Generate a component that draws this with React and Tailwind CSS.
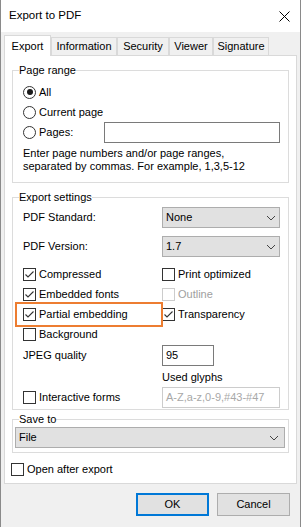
import React from 'react'

const font = "font-['Liberation_Sans',Arial,sans-serif]"

function Box({ checked, disabled }) {
  return (
    <span
      className={`w-[13px] h-[13px] border bg-white flex items-center justify-center shrink-0 ${
        disabled ? 'border-[#cccccc]' : 'border-[#333333]'
      }`}
    >
      {checked && (
        <svg width="11" height="11" viewBox="0 0 11 11">
          <path d="M1.5 5.5 L4 8 L9.5 2.5" fill="none" stroke="#333" strokeWidth="1.1" />
        </svg>
      )}
    </span>
  )
}

function CheckRow({ label, checked, disabled }) {
  return (
    <div className="h-[20px] flex items-center gap-[3px]">
      <Box checked={checked} disabled={disabled} />
      <span className={disabled ? 'text-[#a0a0a0]' : 'text-black'}>{label}</span>
    </div>
  )
}

function Radio({ label, checked }) {
  return (
    <div className="flex items-center gap-[3px]">
      <span className="w-[13px] h-[13px] rounded-full border border-[#333333] bg-white flex items-center justify-center shrink-0">
        {checked && <span className="w-[6px] h-[6px] rounded-full bg-[#1a1a1a]" />}
      </span>
      <span>{label}</span>
    </div>
  )
}

function Chevron() {
  return (
    <svg width="10" height="6" viewBox="0 0 10 6" className="shrink-0">
      <path d="M1 1 L5 5 L9 1" fill="none" stroke="#444" strokeWidth="1" />
    </svg>
  )
}

function Select({ value, className = '' }) {
  return (
    <div
      className={`h-[21px] bg-[#e1e1e1] border border-[#adadad] flex items-center justify-between pl-[3px] pr-[3px] ${className}`}
    >
      <span>{value}</span>
      <Chevron />
    </div>
  )
}

function Group({ title, children, className = '' }) {
  return (
    <fieldset className={`border border-[#dcdcdc] px-[6px] ${className}`}>
      <legend className="leading-[14px] h-[14px]">{title}</legend>
      {children}
    </fieldset>
  )
}

export default function App() {
  const tabs = [
    { name: 'Export', w: 'w-[47px]', active: true },
    { name: 'Information', w: 'w-[66px]' },
    { name: 'Security', w: 'w-[52px]' },
    { name: 'Viewer', w: 'w-[44px]' },
    { name: 'Signature', w: 'w-[56px]' },
  ]

  return (
    <div className={`${font} text-[11px] text-black w-[301px] h-[527px] bg-[#f0f0f0] border-x border-[#8a8a8a] flex flex-col`}>
      {/* title bar */}
      <div className="h-[32px] bg-white flex items-center justify-between pl-[8px] pr-[10px] shrink-0">
        <span className="text-[11.5px]">Export to PDF</span>
        <svg width="11" height="11" viewBox="0 0 11 11">
          <path d="M0.5 0.5 L10.5 10.5 M10.5 0.5 L0.5 10.5" stroke="#000" strokeWidth="1" />
        </svg>
      </div>

      {/* tabs */}
      <div className="h-[23px] flex items-end pl-[3px] shrink-0">
        {tabs.map(t =>
          t.active ? (
            <div
              key={t.name}
              className={`${t.w} h-[21px] -mb-[1px] relative z-10 bg-white border-x border-t border-[#d9d9d9] flex items-center justify-center`}
            >
              {t.name}
            </div>
          ) : (
            <div
              key={t.name}
              className={`${t.w} h-[18px] bg-[#f0f0f0] border border-b-0 border-[#d9d9d9] flex items-center justify-center`}
            >
              {t.name}
            </div>
          )
        )}
      </div>

      {/* tab page */}
      <div className="relative ml-[3px] w-[293px] h-[429px] bg-white border border-[#d9d9d9] px-[7px] shrink-0">
        <Group title="Page range" className="mt-[7px] pb-[9px]">
          <div className="pl-[4px] pr-[2px] pt-[5px]">
            <div className="h-[20px] flex items-center">
              <Radio label="All" checked />
            </div>
            <div className="h-[20px] flex items-center">
              <Radio label="Current page" />
            </div>
            <div className="h-[21px] flex items-center">
              <Radio label="Pages:" />
              <div className="ml-auto w-[176px] h-[21px] border border-[#7a7a7a] bg-white" />
            </div>
            <p className="mt-[4px] leading-[13px]">
              Enter page numbers and/or page ranges,
              <br />
              separated by commas. For example, 1,3,5-12
            </p>
          </div>
        </Group>

        <Group title="Export settings" className="mt-[7px] pb-[1px]">
          <div className="pl-[4px] pr-[2px] pt-[3px] grid grid-cols-[139px_1fr]">
            <div className="h-[21px] flex items-center">PDF Standard:</div>
            <Select value="None" />
            <div className="h-[21px] mt-[8px] flex items-center">PDF Version:</div>
            <Select value="1.7" className="mt-[8px]" />

            <div className="mt-[7px]">
              <CheckRow label="Compressed" checked />
            </div>
            <div className="mt-[7px]">
              <CheckRow label="Print optimized" />
            </div>
            <CheckRow label="Embedded fonts" checked />
            <CheckRow label="Outline" disabled />
            <CheckRow label="Partial embedding" checked />
            <CheckRow label="Transparency" checked />
            <CheckRow label="Background" />
            <div />

            <div className="h-[21px] mt-[1px] flex items-center">JPEG quality</div>
            <div className="mt-[1px] w-[52px] h-[21px] border border-[#7a7a7a] bg-white flex items-center pl-[3px]">
              95
            </div>

            <div />
            <div className="mt-[4px] h-[14px] leading-[14px]">Used glyphs</div>

            <div className="mt-[3px] h-[21px] flex items-center">
              <div className="flex items-center gap-[3px]">
                <Box />
                <span>Interactive forms</span>
              </div>
            </div>
            <div className="mt-[3px] h-[21px] border border-[#cccccc] bg-white flex items-center pl-[3px] text-[#a8a8a8]">
              A-Z,a-z,0-9,#43-#47
            </div>
          </div>
        </Group>

        {/* highlight around "Partial embedding" */}
        <div className="absolute left-[10px] top-[246px] w-[148px] h-[25px] border-2 border-[#ed7d31] pointer-events-none" />

        <fieldset className="mt-[2px] border border-[#dcdcdc] px-[2px] pb-[4px]">
          <legend className="ml-[4px] leading-[14px] h-[14px]">Save to</legend>
          <div className="pt-[1px]">
            <Select value="File" className="w-[270px] pr-[5px]" />
          </div>
        </fieldset>

        <div className="mt-[6px] -ml-[1px]">
          <CheckRow label="Open after export" />
        </div>
      </div>

      {/* buttons */}
      <div className="mt-[9px] flex justify-end gap-[8px] pr-[10px]">
        <button className="w-[73px] h-[23px] bg-[#e1e1e1] border-2 border-[#0078d7]">OK</button>
        <button className="w-[73px] h-[23px] bg-[#e1e1e1] border border-[#adadad]">Cancel</button>
      </div>
    </div>
  )
}
